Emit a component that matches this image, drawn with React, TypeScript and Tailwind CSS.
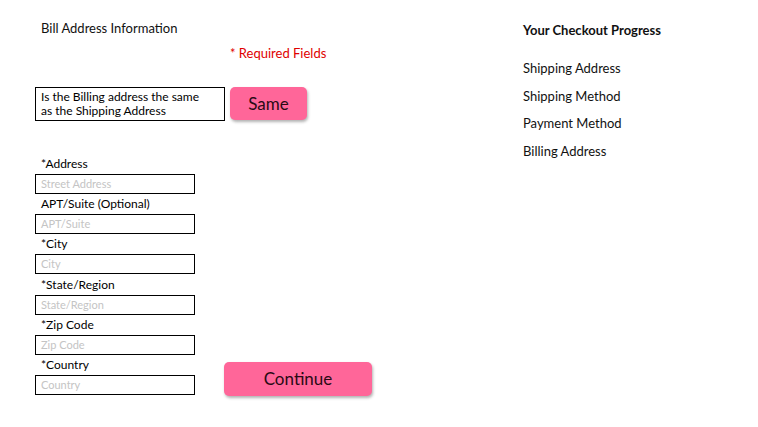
import React from "react";

const fields = [
  { label: "*Address", ph: "Street Address", lh: "h-[20px]" },
  { label: "APT/Suite (Optional)", ph: "APT/Suite", lh: "h-[20px]" },
  { label: "*City", ph: "City", lh: "h-[20px]" },
  { label: "*State/Region", ph: "State/Region", lh: "h-[21px]" },
  { label: "*Zip Code", ph: "Zip Code", lh: "h-[20px]" },
];

function Field({ label, ph, lh }: { label: string; ph: string; lh: string }) {
  return (
    <div className="flex flex-col w-[160px]">
      <div className={`${lh} pl-[6px] flex items-center text-[12px] text-black`}>{label}</div>
      <div className="h-[20px] border border-black pl-[5px] flex items-center text-[11px] text-[#c4c4c4]">{ph}</div>
    </div>
  );
}

export default function App() {
  return (
    <div className="w-[758px] h-[427px] bg-white flex font-['Lato',sans-serif] text-[#111]">
      <div className="w-[488px] pl-[35px] flex flex-col">
        <div className="pl-[6px] pt-[20px] text-[13px] leading-[16px]">Bill Address Information</div>
        <div className="ml-[195px] mt-[9px] text-[13px] leading-[16px] text-[#e00000]">* Required Fields</div>
        <div className="mt-[26px] flex gap-[5px]">
          <div className="w-[190px] h-[34px] border border-black pl-[5px] pt-[2px] text-[12px] leading-[14px] text-black">
            Is the Billing address the same
            <br />
            as the Shipping Address
          </div>
          <div className="w-[77px] h-[33px] rounded-[5px] bg-[#ff6699] shadow-[1px_2px_3px_rgba(0,0,0,0.3)] flex items-center justify-center text-[17px] text-[#2a0a14]">
            Same
          </div>
        </div>
        <div className="mt-[33px] flex flex-col gap-0">
          {fields.map((f) => (
            <Field key={f.label} label={f.label} ph={f.ph} lh={f.lh} />
          ))}
          <div className="flex">
            <Field label="*Country" ph="Country" lh="h-[20px]" />
            <div className="ml-[29px] mt-[7px] w-[148px] h-[34px] rounded-[5px] bg-[#ff6699] shadow-[1px_2px_3px_rgba(0,0,0,0.3)] flex items-center justify-center text-[17px] text-[#2a0a14]">
              Continue
            </div>
          </div>
        </div>
      </div>
      <div className="pl-[35px] pt-[22px] flex flex-col text-[13px]">
        <div className="font-bold leading-[16px]">Your Checkout Progress</div>
        <div className="mt-[22px] flex flex-col gap-[11.7px] leading-[16px]">
          <div>Shipping Address</div>
          <div>Shipping Method</div>
          <div>Payment Method</div>
          <div>Billing Address</div>
        </div>
      </div>
    </div>
  );
}
